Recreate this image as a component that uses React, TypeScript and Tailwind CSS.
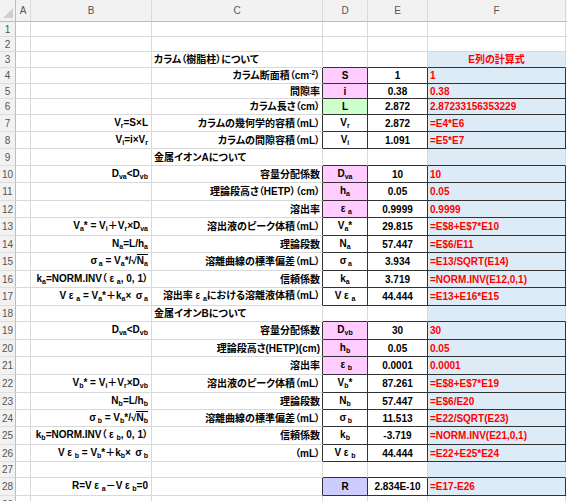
import type { ReactNode } from "react";

const Sub = ({ children }: { children: ReactNode }) => (
  <span className="text-[7px] align-[-2px]">{children}</span>
);

const Sup = ({ children }: { children: ReactNode }) => (
  <span className="text-[6.5px] align-[4px]">{children}</span>
);

// greek letters are drawn full width in the sheet
const Gk = ({ children }: { children: ReactNode }) => (
  <span className="inline-block w-[1em] text-center">{children}</span>
);

const Root = ({ children }: { children: ReactNode }) => (
  <>
    √<span className="border-t border-black">{children}</span>
  </>
);

type Row = {
  n: number;
  h: string;
  b?: ReactNode;
  c?: ReactNode;
  heading?: boolean;
  d?: ReactNode;
  dBg?: string;
  e?: string;
  f?: string;
  box?: boolean;
  fBlue?: boolean;
  top?: boolean;
};

const rows: Row[] = [
  { n: 1, h: "h-[15px]" },
  { n: 2, h: "h-[15px]" },
  { n: 3, h: "h-[16px]", c: "カラム（樹脂柱）について", heading: true, f: "E列の計算式", fBlue: true, top: true },
  { n: 4, h: "h-[16px]", box: true, c: <>カラム断面積（cm<Sup>-2</Sup>）</>, d: "S", dBg: "bg-[#ffccff]", e: "1", f: "1" },
  { n: 5, h: "h-[15px]", box: true, c: "間隙率", d: "i", dBg: "bg-[#ffccff]", e: "0.38", f: "0.38" },
  { n: 6, h: "h-[16px]", box: true, c: "カラム長さ（cm）", d: "L", dBg: "bg-[#ccffcc]", e: "2.872", f: "2.87233156353229" },
  { n: 7, h: "h-[17px]", box: true, b: <>V<Sub>r</Sub>=S×L</>, c: "カラムの幾何学的容積（mL）", d: <>V<Sub>r</Sub></>, e: "2.872", f: "=E4*E6" },
  { n: 8, h: "h-[17px]", box: true, b: <>V<Sub>i</Sub>=i×V<Sub>r</Sub></>, c: "カラムの間隙容積（mL）", d: <>V<Sub>i</Sub></>, e: "1.091", f: "=E5*E7" },
  { n: 9, h: "h-[17px]", c: "金属イオンAについて", heading: true, fBlue: true, top: true },
  { n: 10, h: "h-[17px]", box: true, b: <>D<Sub>va</Sub>&lt;D<Sub>vb</Sub></>, c: "容量分配係数", d: <>D<Sub>va</Sub></>, dBg: "bg-[#ffccff]", e: "10", f: "10" },
  { n: 11, h: "h-[18px]", box: true, c: "理論段高さ（HETP）（cm）", d: <>h<Sub>a</Sub></>, dBg: "bg-[#ffccff]", e: "0.05", f: "0.05" },
  { n: 12, h: "h-[17px]", box: true, c: "溶出率", d: <><Gk>ε</Gk><Sub>a</Sub></>, dBg: "bg-[#ffccff]", e: "0.9999", f: "0.9999" },
  { n: 13, h: "h-[18px]", box: true, b: <>V<Sub>a</Sub>* = V<Sub>i</Sub>＋V<Sub>r</Sub>×D<Sub>va</Sub></>, c: "溶出液のピーク体積（mL）", d: <>V<Sub>a</Sub>*</>, e: "29.815", f: "=E$8+E$7*E10" },
  { n: 14, h: "h-[17px]", box: true, b: <>N<Sub>a</Sub>=L/h<Sub>a</Sub></>, c: "理論段数", d: <>N<Sub>a</Sub></>, e: "57.447", f: "=E$6/E11" },
  { n: 15, h: "h-[18px]", box: true, b: <><Gk>σ</Gk><Sub>a</Sub> = V<Sub>a</Sub>*/<Root>N<Sub>a</Sub></Root></>, c: "溶離曲線の標準偏差（mL）", d: <><Gk>σ</Gk><Sub>a</Sub></>, e: "3.934", f: "=E13/SQRT(E14)" },
  { n: 16, h: "h-[17px]", box: true, b: <>k<Sub>a</Sub>=NORM.INV（<Gk>ε</Gk><Sub>a</Sub>, 0, 1）</>, c: "信頼係数", d: <>k<Sub>a</Sub></>, e: "3.719", f: "=NORM.INV(E12,0,1)" },
  { n: 17, h: "h-[18px]", box: true, b: <>V<Gk>ε</Gk><Sub>a</Sub> = V<Sub>a</Sub>*＋k<Sub>a</Sub>× <Gk>σ</Gk><Sub>a</Sub></>, c: <>溶出率<Gk>ε</Gk><Sub>a</Sub>における溶離液体積（mL）</>, d: <>V<Gk>ε</Gk><Sub>a</Sub></>, e: "44.444", f: "=E13+E16*E15" },
  { n: 18, h: "h-[16px]", c: "金属イオンBについて", heading: true, fBlue: true, top: true },
  { n: 19, h: "h-[18px]", box: true, b: <>D<Sub>va</Sub>&lt;D<Sub>vb</Sub></>, c: "容量分配係数", d: <>D<Sub>vb</Sub></>, dBg: "bg-[#ffccff]", e: "30", f: "30" },
  { n: 20, h: "h-[17px]", box: true, c: "理論段高さ(HETP)(cm)", d: <>h<Sub>b</Sub></>, dBg: "bg-[#ffccff]", e: "0.05", f: "0.05" },
  { n: 21, h: "h-[18px]", box: true, c: "溶出率", d: <><Gk>ε</Gk><Sub>b</Sub></>, dBg: "bg-[#ffccff]", e: "0.0001", f: "0.0001" },
  { n: 22, h: "h-[18px]", box: true, b: <>V<Sub>b</Sub>* = V<Sub>i</Sub>＋V<Sub>r</Sub>×D<Sub>vb</Sub></>, c: "溶出液のピーク体積（mL）", d: <>V<Sub>b</Sub>*</>, e: "87.261", f: "=E$8+E$7*E19" },
  { n: 23, h: "h-[17px]", box: true, b: <>N<Sub>b</Sub>=L/h<Sub>b</Sub></>, c: "理論段数", d: <>N<Sub>b</Sub></>, e: "57.447", f: "=E$6/E20" },
  { n: 24, h: "h-[17px]", box: true, b: <><Gk>σ</Gk><Sub>b</Sub> = V<Sub>b</Sub>*/<Root>N<Sub>b</Sub></Root></>, c: "溶離曲線の標準偏差（mL）", d: <><Gk>σ</Gk><Sub>b</Sub></>, e: "11.513", f: "=E22/SQRT(E23)" },
  { n: 25, h: "h-[18px]", box: true, b: <>k<Sub>b</Sub>=NORM.INV（<Gk>ε</Gk><Sub>b</Sub>, 0, 1）</>, c: "信頼係数", d: <>k<Sub>b</Sub></>, e: "-3.719", f: "=NORM.INV(E21,0,1)" },
  { n: 26, h: "h-[17px]", box: true, b: <>V<Gk>ε</Gk><Sub>b</Sub> = V<Sub>b</Sub>*＋k<Sub>b</Sub>× <Gk>σ</Gk><Sub>b</Sub></>, c: "（mL）", d: <>V<Gk>ε</Gk><Sub>b</Sub></>, e: "44.444", f: "=E22+E25*E24" },
  { n: 27, h: "h-[16px]", fBlue: true, top: true },
  { n: 28, h: "h-[18px]", box: true, b: <>R=V<Gk>ε</Gk><Sub>a</Sub>－V<Gk>ε</Gk><Sub>b</Sub>=0</>, d: "R", dBg: "bg-[#ccccff]", e: "2.834E-10", f: "=E17-E26" },
  { n: 29, h: "h-[17px]" },
];

const light = { r: "border-r-[#d9d9d9]", b: "border-b-[#d9d9d9]" };
const dark = { r: "border-r-[#333333]", b: "border-b-[#333333]" };

function Cell({ className, children }: { className: string; children?: ReactNode }) {
  return (
    <div className={`shrink-0 h-full flex items-center whitespace-nowrap border-r border-b ${className}`}>
      <span>{children}</span>
    </div>
  );
}

function Header() {
  const cols = [
    ["A", "w-[15px]"],
    ["B", "w-[121px]"],
    ["C", "w-[171px]"],
    ["D", "w-[45px]"],
    ["E", "w-[60px]"],
    ["F", "w-[138px]"],
  ];
  return (
    <div className="flex h-[22px] bg-[#f2f2f2] text-[10px] text-[#555555] border-b border-[#bdbdbd]">
      <div className="w-[16px] shrink-0 border-r border-[#bdbdbd] flex items-end justify-end">
        <svg width="12" height="12" viewBox="0 0 12 12" className="mb-[2px] mr-[1px]">
          <polygon points="1,11 11,11 11,1" fill="#cfcfcf" />
        </svg>
      </div>
      {cols.map(([l, w]) => (
        <div key={l} className={`${w} shrink-0 border-r border-[#dcdcdc] flex items-center justify-center`}>
          {l}
        </div>
      ))}
      <div className="flex-1" />
    </div>
  );
}

export default function App() {
  return (
    <div className="w-[567px] h-[501px] overflow-hidden bg-white font-['Liberation_Sans','Noto_Sans_CJK_JP',sans-serif] [font-feature-settings:'palt']">
      <Header />
      {rows.map((r) => {
        const def = r.box ? dark : light;
        const defB = r.box || r.top ? dark.b : light.b;
        return (
          <div key={r.n} className={`flex ${r.h} text-[10px] font-bold text-black`}>
            <div className="w-[16px] shrink-0 h-full bg-[#f2f2f2] border-r border-b border-r-[#bdbdbd] border-b-[#dedede] flex items-center justify-center text-[10px] font-normal text-[#555555]">
              {r.n}
            </div>
            <Cell className={`w-[15px] ${light.r} ${light.b}`} />
            <Cell className={`w-[121px] justify-end pr-[3px] ${light.r} ${light.b}`}>{r.b}</Cell>
            <Cell
              className={`w-[171px] ${r.heading ? "justify-start pl-[2px]" : "justify-end pr-[2px]"} ${r.box ? dark.r : light.r} ${light.b}`}
            >
              {r.c}
            </Cell>
            <Cell className={`w-[45px] justify-center ${r.dBg ?? "bg-white"} ${def.r} ${defB}`}>{r.d}</Cell>
            <Cell className={`w-[60px] justify-center ${def.r} ${defB}`}>{r.e}</Cell>
            <Cell
              className={`w-[138px] ${r.n === 3 ? "justify-center" : "justify-start pl-[2px]"} text-[#ff0000] ${r.fBlue || r.box ? "bg-[#ddebf7]" : "bg-white"} ${def.r} ${defB}`}
            >
              {r.f}
            </Cell>
            <div className="flex-1 h-full border-b border-b-[#d9d9d9]" />
          </div>
        );
      })}
    </div>
  );
}
